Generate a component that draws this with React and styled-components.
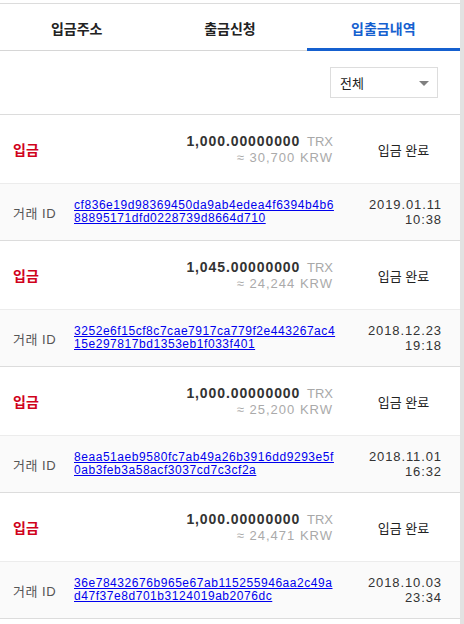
import styled, { createGlobalStyle } from 'styled-components';

const GlobalStyle = createGlobalStyle`
  body {
    margin: 0;
    background: #fff;
    font-family: "Liberation Sans", "Noto Sans CJK KR", sans-serif;
  }
`;

const Page = styled.div`
  display: flex;
  min-height: 624px;
`;

const Main = styled.div`
  width: 460px;
  padding-top: 3px;
`;

const Rail = styled.div`
  width: 4px;
  background: #e2e2e2;
`;

const Tabs = styled.nav`
  display: grid;
  grid-template-columns: repeat(3, 1fr);
  border-top: 1px solid #dcdcdc;
  border-bottom: 1px solid #d6d6d6;
`;

const Tab = styled.div`
  box-sizing: border-box;
  height: 47px;
  margin-bottom: -1px;
  display: flex;
  align-items: center;
  justify-content: center;
  font-size: 14px;
  font-weight: bold;
  color: ${p => (p.$active ? '#1560cf' : '#222')};
  border-bottom: ${p => (p.$active ? '3px solid #1560cf' : 'none')};
  padding-top: ${p => (p.$active ? '3px' : '0')};
`;

const Filter = styled.div`
  display: flex;
  justify-content: flex-end;
  padding: 16px 22px 16px 0;
  border-bottom: 1px solid #dcdcdc;
`;

const Select = styled.div`
  box-sizing: border-box;
  width: 108px;
  height: 31px;
  border: 1px solid #ddd;
  display: flex;
  align-items: center;
  justify-content: space-between;
  padding: 0 8px 0 9px;
  font-size: 13px;
  color: #222;
`;

const Caret = styled.span`
  width: 0;
  height: 0;
  border-left: 5px solid transparent;
  border-right: 5px solid transparent;
  border-top: 5px solid #808080;
  margin-top: 2px;
`;

const Row = styled.div`
  display: grid;
  grid-template-columns: 61px 1fr 77px;
  align-items: center;
  padding: 0 18px 0 13px;
`;

const DepositRow = styled(Row)`
  height: 68px;
  border-bottom: 1px solid #ececec;
`;

const DetailRow = styled(Row)`
  height: 56px;
  background: #fafafa;
  border-bottom: 1px solid #dcdcdc;
`;

const Kind = styled.span`
  color: #d0021b;
  font-size: 14px;
  font-weight: bold;
`;

const Amount = styled.div`
  text-align: right;
  padding-right: 32px;
  line-height: 16px;
`;

const Coin = styled.div`
  font-size: 14px;
  font-weight: bold;
  color: #333;
  letter-spacing: 0.9px;
  span {
    font-size: 13px;
    font-weight: normal;
    color: #a8a8a8;
    letter-spacing: 0;
    margin-left: 2px;
  }
`;

const Won = styled.div`
  font-size: 13px;
  color: #aaa;
  letter-spacing: 1px;
`;

const Status = styled.div`
  text-align: center;
  font-size: 13px;
  color: #222;
`;

const Label = styled.span`
  font-size: 13px;
  color: #555;
  letter-spacing: 0.5px;
`;

const Hash = styled.a`
  justify-self: start;
  font-size: 12px;
  line-height: 13px;
  letter-spacing: 0.55px;
  color: #0000ee;
  text-decoration: underline;
  white-space: nowrap;
`;

const When = styled.div`
  text-align: right;
  font-size: 13px;
  line-height: 15px;
  color: #333;
  letter-spacing: 0.9px;
  white-space: nowrap;
`;

const items = [
  {
    amount: '1,000.00000000', krw: '30,700',
    hash: 'cf836e19d98369450da9ab4edea4f6394b4b688895171dfd0228739d8664d710', cut: 37,
    date: '2019.01.11', time: '10:38',
  },
  {
    amount: '1,045.00000000', krw: '24,244',
    hash: '3252e6f15cf8c7cae7917ca779f2e443267ac415e297817bd1353eb1f033f401', cut: 38,
    date: '2018.12.23', time: '19:18',
  },
  {
    amount: '1,000.00000000', krw: '25,200',
    hash: '8eaa51aeb9580fc7ab49a26b3916dd9293e5f0ab3feb3a58acf3037cd7c3cf2a', cut: 37,
    date: '2018.11.01', time: '16:32',
  },
  {
    amount: '1,000.00000000', krw: '24,471',
    hash: '36e78432676b965e67ab115255946aa2c49ad47f37e8d701b3124019ab2076dc', cut: 36,
    date: '2018.10.03', time: '23:34',
  },
];

export default function App() {
  return (
    <Page>
      <GlobalStyle />
      <Main>
        <Tabs>
          <Tab>입금주소</Tab>
          <Tab>출금신청</Tab>
          <Tab $active>입출금내역</Tab>
        </Tabs>
        <Filter>
          <Select>
            <span>전체</span>
            <Caret />
          </Select>
        </Filter>
        {items.map(it => (
          <div key={it.hash}>
            <DepositRow>
              <Kind>입금</Kind>
              <Amount>
                <Coin>{it.amount} <span>TRX</span></Coin>
                <Won>≈ {it.krw} KRW</Won>
              </Amount>
              <Status>입금 완료</Status>
            </DepositRow>
            <DetailRow>
              <Label>거래 ID</Label>
              <Hash href="#">
                {it.hash.slice(0, it.cut)}
                <br />
                {it.hash.slice(it.cut)}
              </Hash>
              <When>
                {it.date}
                <br />
                {it.time}
              </When>
            </DetailRow>
          </div>
        ))}
      </Main>
      <Rail />
    </Page>
  );
}
